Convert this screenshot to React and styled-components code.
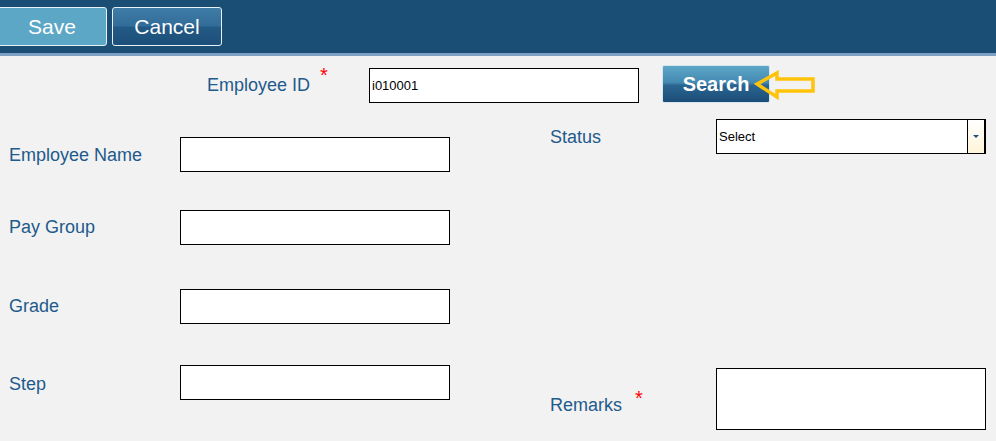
import React from "react";
import styled, { createGlobalStyle } from "styled-components";

const GlobalStyle = createGlobalStyle`
  body {
    margin: 0;
    background: #f2f2f2;
    font-family: "Liberation Sans", Arial, sans-serif;
  }
`;

const Header = styled.header`
  height: 46px;
  padding-top: 7px;
  background: #1b4e75;
  border-bottom: 3px solid #7d9fc3;
  display: flex;
  align-items: flex-start;
  gap: 5px;
`;

const ToolButton = styled.button`
  height: 39px;
  width: 110px;
  border: 1px solid #e8f1f7;
  border-radius: 3px;
  color: #fff;
  font-family: "Liberation Sans", Arial, sans-serif;
  font-size: 21px;
  padding: 0;
  cursor: pointer;
  background: ${(p) =>
    p.$active
      ? "#5ca6c6"
      : "linear-gradient(#3f7ca6 0%, #316d98 48%, #225a85 52%, #1c4f79 100%)"};
  margin-left: ${(p) => (p.$first ? "-3px" : "0")};
`;

const Main = styled.main`
  padding-top: 9px;
`;

const TopRow = styled.div`
  display: flex;
  align-items: center;
  height: 38px;
  padding-left: 207px;
`;

const Label = styled.label`
  display: block;
  flex: none;
  width: ${(p) => p.$width}px;
  padding-top: ${(p) => p.$drop || 0}px;
  color: #1e5a8c;
  font-size: 18px;
  white-space: nowrap;
`;

const Star = styled.span`
  color: #ff0000;
  font-size: 20px;
  line-height: 0;
  margin-left: ${(p) => p.$gap}px;
  vertical-align: ${(p) => p.$raise}px;
`;

const TextBox = styled.input`
  box-sizing: border-box;
  width: 270px;
  height: 35px;
  border: 1px solid #000;
  background: #fff;
  padding: 0 2px;
  font-family: "Liberation Sans", Arial, sans-serif;
  font-size: 13px;
  color: #000;
  outline: none;
  align-self: ${(p) => (p.$bottom ? "flex-end" : "auto")};
`;

const SearchWrap = styled.div`
  position: relative;
  margin-left: 23px;
  height: 38px;
`;

const SearchButton = styled.button`
  width: 108px;
  height: 38px;
  border: 1px solid #d6e6ef;
  border-radius: 2px;
  color: #fff;
  font-family: "Liberation Sans", Arial, sans-serif;
  font-weight: bold;
  font-size: 20px;
  padding: 0;
  background: linear-gradient(#5ea7c8 0%, #4489b1 46%, #2a6590 54%, #1b4d77 100%);
`;

const Arrow = styled.svg`
  position: absolute;
  left: 93px;
  top: 6px;
  overflow: visible;
`;

const Columns = styled.div`
  display: grid;
  grid-template-columns: 550px 1fr;
  margin-top: 16px;
`;

const LeftColumn = styled.div`
  padding: 18px 0 0 9px;
`;

const RightColumn = styled.div``;

const FieldRow = styled.div`
  display: flex;
  align-items: center;
  margin-top: ${(p) => p.$top || 0}px;
`;

const SelectBox = styled.div`
  box-sizing: border-box;
  width: 270px;
  height: 35px;
  border: 1px solid #000;
  border-right-width: 2px;
  background: #fff;
  display: flex;
  align-items: stretch;
  font-size: 13px;
  color: #000;
`;

const SelectText = styled.span`
  flex: 1;
  display: flex;
  align-items: center;
  padding-left: 2px;
`;

const DropButton = styled.span`
  width: 16px;
  border-left: 1px solid #000;
  background: linear-gradient(#ffffff, #fff4d8);
  display: flex;
  align-items: center;
  justify-content: center;

  &::after {
    content: "";
    border-left: 3px solid transparent;
    border-right: 3px solid transparent;
    border-top: 3px solid #1d4f7d;
  }
`;

const TextArea = styled.textarea`
  box-sizing: border-box;
  width: 270px;
  height: 62px;
  border: 1px solid #000;
  background: #fff;
  resize: none;
  outline: none;
`;

const leftFields = [
  { label: "Employee Name", top: 0, drop: 1 },
  { label: "Pay Group", top: 38, drop: 0 },
  { label: "Grade", top: 44, drop: 0 },
  { label: "Step", top: 41, drop: 4 },
];

export default function App() {
  return (
    <>
      <GlobalStyle />
      <Header>
        <ToolButton $active $first>Save</ToolButton>
        <ToolButton>Cancel</ToolButton>
      </Header>
      <Main>
        <TopRow>
          <Label $width={162} $drop={3}>
            Employee ID<Star $gap={10} $raise={9}>*</Star>
          </Label>
          <TextBox $bottom defaultValue="i010001" />
          <SearchWrap>
            <SearchButton>Search</SearchButton>
            <Arrow width="60" height="30" viewBox="0 0 60 30">
              <polygon
                points="2,13 22,2 22,8 58,8 58,20 22,20 22,26"
                fill="none"
                stroke="#ffc40a"
                strokeWidth="3.5"
                strokeLinejoin="miter"
              />
            </Arrow>
          </SearchWrap>
        </TopRow>
        <Columns>
          <LeftColumn>
            {leftFields.map((f) => (
              <FieldRow key={f.label} $top={f.top}>
                <Label $width={171} $drop={f.drop}>{f.label}</Label>
                <TextBox />
              </FieldRow>
            ))}
          </LeftColumn>
          <RightColumn>
            <FieldRow>
              <Label $width={166} $drop={2}>Status</Label>
              <SelectBox>
                <SelectText>Select</SelectText>
                <DropButton />
              </SelectBox>
            </FieldRow>
            <FieldRow $top={214}>
              <Label $width={166} $drop={12}>
                Remarks<Star $gap={13} $raise={6}>*</Star>
              </Label>
              <TextArea />
            </FieldRow>
          </RightColumn>
        </Columns>
      </Main>
    </>
  );
}
